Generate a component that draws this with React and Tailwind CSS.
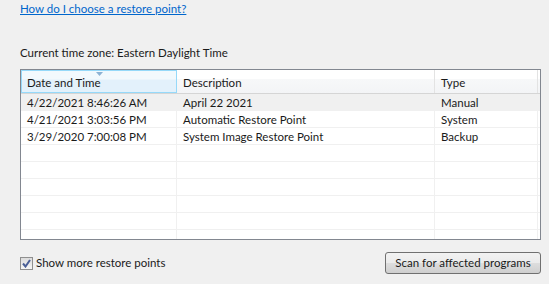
import React from "react";

const rows = [
  ["4/22/2021 8:46:26 AM", "April 22 2021", "Manual"],
  ["4/21/2021 3:03:56 PM", "Automatic Restore Point", "System"],
  ["3/29/2020 7:00:08 PM", "System Image Restore Point", "Backup"],
  ["", "", ""],
  ["", "", ""],
  ["", "", ""],
  ["", "", ""],
  ["", "", ""],
];

export default function App() {
  return (
    <div
      className="w-[549px] h-[284px] bg-[#f0f0f0] text-[11.5px] text-[#1a1a1a] overflow-hidden pl-[20px]"
      style={{ fontFamily: 'Lato, "Noto Sans", sans-serif' }}
    >
      <div className="pt-[1px] h-[16px] leading-[16px]">
        <span className="text-[#0066cc] underline">How do I choose a restore point?</span>
      </div>
      <div className="mt-[29px] h-[16px] leading-[16px]">Current time zone: Eastern Daylight Time</div>
      <div className="mt-[8px] w-[521px] h-[171px] border border-[#828790] bg-white flex flex-col">
        <div className="flex h-[24px] border-b border-[#d5d5d5] bg-[linear-gradient(#ffffff_0%,#ffffff_40%,#f7f8f9_41%,#f3f4f6_100%)]">
          <div className="relative w-[156px] shrink-0 border border-[#96d9f9] bg-[linear-gradient(#f2f9fd_0%,#f2f9fd_40%,#e3f1fb_41%,#e3f1fb_100%)] pl-[5px] leading-[23px]">
            Date and Time
            <svg className="absolute left-[74px] top-[1px]" width="8" height="5" viewBox="0 0 8 5">
              <path d="M0 0 H7 L3.5 4 Z" fill="#8db2d3" />
            </svg>
          </div>
          <div className="w-[258px] shrink-0 border-r border-[#e3e3e3] pl-[6px] leading-[25px]">Description</div>
          <div className="flex-1 pl-[6px] leading-[25px] mr-[2px] border-r border-[#e3e3e3]">Type</div>
        </div>
        {rows.map((r, i) => (
          <div
            key={i}
            className={`flex h-[17px] leading-[17px] border-b border-[#f0f0f0] ${i === 0 ? "bg-[#f0f0f0]" : ""}`}
          >
            <div className="w-[156px] shrink-0 border-r border-[#f0f0f0] pl-[6px]">{r[0]}</div>
            <div className="w-[258px] shrink-0 border-r border-[#f0f0f0] pl-[6px]">{r[1]}</div>
            <div className="flex-1 pl-[6px] mr-[2px] border-r border-[#f0f0f0]">{r[2]}</div>
          </div>
        ))}
        <div className="flex flex-1">
          <div className="w-[156px] shrink-0 border-r border-[#f0f0f0]"></div>
          <div className="w-[258px] shrink-0 border-r border-[#f0f0f0]"></div>
          <div className="flex-1 mr-[2px] border-r border-[#f0f0f0]"></div>
        </div>
      </div>
      <div className="mt-[12px] flex items-start w-[521px]">
        <div className="flex items-center h-[14px] mt-[4px]">
          <div className="w-[13px] h-[13px] border border-[#8f8f8f] bg-[linear-gradient(#dcdcdc,#f6f6f6)] flex items-center justify-center">
            <svg width="9" height="9" viewBox="0 0 9 9">
              <path d="M1 4.5 L3.5 7.5 L8 1" stroke="#4a5f97" strokeWidth="2" fill="none" />
            </svg>
          </div>
          <span className="ml-[3px] leading-[14px]">Show more restore points</span>
        </div>
        <button className="ml-auto w-[156px] h-[22px] rounded-[3px] border border-[#707070] bg-[linear-gradient(#f2f2f2_0%,#ebebeb_50%,#dddddd_51%,#cfcfcf_100%)] leading-[20px] text-[#1a1a1a]">
          Scan for affected programs
        </button>
      </div>
    </div>
  );
}
